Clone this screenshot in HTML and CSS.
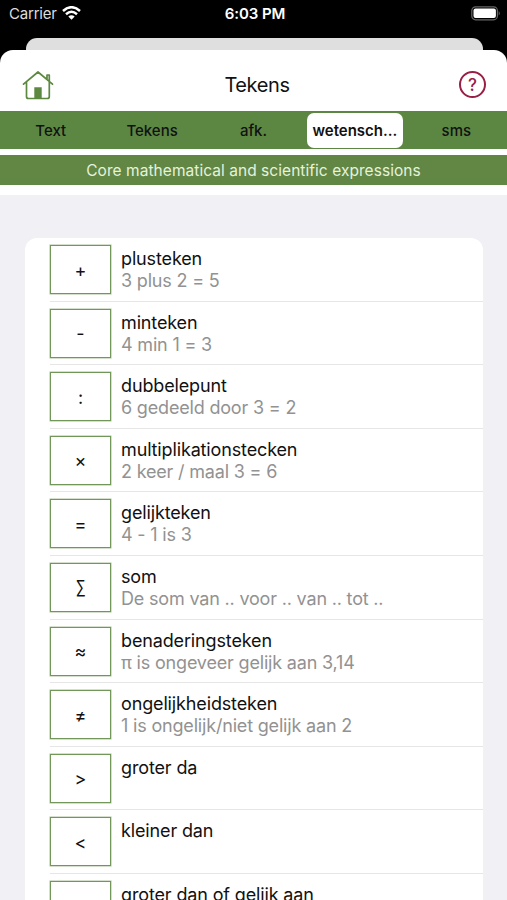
FILE: index.html
```html
<!DOCTYPE html>
<html lang="nl">
<head>
<meta charset="utf-8">
<title>Tekens</title>
<link rel="stylesheet" href="styles.css">
</head>
<body>
<div class="status">
  <div class="carrier"><span>Carrier</span>
    <svg class="wifi" width="19" height="14" viewBox="0 0 19 14"><path d="M1 5Q9.500-2.600 18 5M4 8.200Q9.500 3.400 15 8.200" fill="none" stroke="#fff" stroke-width="2.500"/><path d="M6.300 10.500Q9.500 7.800 12.700 10.500L9.500 13.700Z" fill="#fff"/></svg>
  </div>
  <div class="time">6:03 PM</div>
  <svg class="battery" width="31" height="15" viewBox="0 0 31 15"><rect x="1.800" y=".8" width="25.600" height="13" rx="3.800" fill="none" stroke="#666" stroke-width="1.200"/><rect x="3.500" y="2.500" width="22.400" height="9.600" rx="2" fill="#fff"/><path d="M28.700 5q2.200 2.300 0 4.600z" fill="#666"/></svg>
</div>
<div class="backcard"></div>
<main class="sheet">
  <header class="nav">
    <svg class="home" width="32" height="30" viewBox="0 0 32 30"><g fill="none" stroke="#5c8840" stroke-width="1.700" stroke-linejoin="round" stroke-linecap="round"><path d="M1.500 14.200L16 2l14.500 12.200M4.500 12v14.500q0 2 2 2h18.800q2 0 2-2V12M25 9.500V5h2.300v6.500"/></g><path d="M12.300 17.200h7.400v11h-7.400z" fill="#5c8840"/></svg>
    <h1>Tekens</h1>
    <div class="help">?</div>
  </header>
  <nav class="tabs">
    <span>Text</span><span>Tekens</span><span>afk.</span><span class="active">wetensch...</span><span>sms</span>
  </nav>
  <p class="caption">Core mathematical and scientific expressions</p>
  <section class="content">
    <ul class="list">
      <li><b>+</b><div><h2>plusteken</h2><p>3 plus 2 = 5</p></div></li>
      <li><b>-</b><div><h2>minteken</h2><p>4 min 1 = 3</p></div></li>
      <li><b>:</b><div><h2>dubbelepunt</h2><p>6 gedeeld door 3 = 2</p></div></li>
      <li><b>×</b><div><h2>multiplikationstecken</h2><p>2 keer / maal 3 = 6</p></div></li>
      <li><b>=</b><div><h2>gelijkteken</h2><p>4 - 1 is 3</p></div></li>
      <li><b><span class="sum">∑</span></b><div><h2>som</h2><p>De som van .. voor .. van .. tot ..</p></div></li>
      <li><b>≈</b><div><h2>benaderingsteken</h2><p>π is ongeveer gelijk aan 3,14</p></div></li>
      <li><b>≠</b><div><h2>ongelijkheidsteken</h2><p>1 is ongelijk/niet gelijk aan 2</p></div></li>
      <li><b>&gt;</b><div><h2>groter da</h2></div></li>
      <li><b>&lt;</b><div><h2>kleiner dan</h2></div></li>
      <li><b></b><div><h2>groter dan of gelijk aan</h2></div></li>
    </ul>
  </section>
</main>
</body>
</html>
```
FILE: styles.css
```css
* { box-sizing: border-box; margin: 0; padding: 0; }
body { width: 507px; height: 900px; overflow: hidden; background: #000; display: flex; flex-direction: column; font-family: Inter, "Liberation Sans", sans-serif; color: #111; }
.status { flex: none; height: 38px; padding: 0 6px 12px 9px; display: grid; grid-template-columns: 1fr auto 1fr; align-items: center; color: #fff; font-size: 15px; }
.carrier { display: flex; align-items: center; gap: 5px; color: #ddd; letter-spacing: -.2px; }
.time { font-weight: 600; letter-spacing: -.1px; }
.battery { justify-self: end; }
.backcard { flex: none; height: 12px; margin: 0 24px 0 26px; background: #dfdfdf; border-radius: 11px 11px 0 0; }
.sheet { flex: 1; min-height: 0; background: #fff; border-radius: 13px 13px 0 0; overflow: hidden; display: flex; flex-direction: column; }
.nav { flex: none; height: 61px; padding: 8px 21px 0 22px; display: grid; grid-template-columns: 1fr auto 1fr; align-items: center; }
h1 { padding-left: 6px; font-size: 20px; font-weight: 400; letter-spacing: -.4px; }
.help { justify-self: end; width: 27px; height: 27px; border: 2px solid #982044; border-radius: 50%; color: #982044; font-size: 17px; font-weight: 500; line-height: 24px; text-align: center; }
.tabs { flex: none; height: 38px; padding: 2px 0; background: #5c8743; display: grid; grid-template-columns: repeat(5, 1fr); align-items: center; text-align: center; font-size: 15px; font-weight: 500; }
.tabs .active { width: 96px; height: 35px; line-height: 35px; justify-self: center; background: #fff; border-radius: 7px; font-weight: 600; }
.caption { flex: none; height: 30px; margin-top: 6px; background: #628644; color: #e4f3dc; font-size: 15.500px; letter-spacing: .05px; line-height: 31px; text-align: center; }
.content { flex: 1; min-height: 0; margin-top: 10px; padding: 43px 24px 0 25px; background: #f0f0f5; }
.list { list-style: none; background: #fff; border-radius: 12px 12px 0 0; }
li { height: 63.600px; padding: 7px 0 0 25px; display: flex; gap: 10px; background: linear-gradient(#e6e6e6, #e6e6e6) 25px 100% / 100% 1px no-repeat; }
li b { width: 61px; height: 49px; border: 1.500px solid #719858; display: flex; align-items: center; justify-content: center; padding-top: 1px; font-size: 18px; font-weight: 400; box-shadow: 0 0 0 .5px #a9c197; }
.sum { transform: scaleX(.8); }
li h2 { font-size: 18px; font-weight: 400; line-height: 22px; letter-spacing: -.14px; margin-top: 3px; }
li p { font-size: 18px; line-height: 22px; letter-spacing: -.18px; color: #929292; }
```
